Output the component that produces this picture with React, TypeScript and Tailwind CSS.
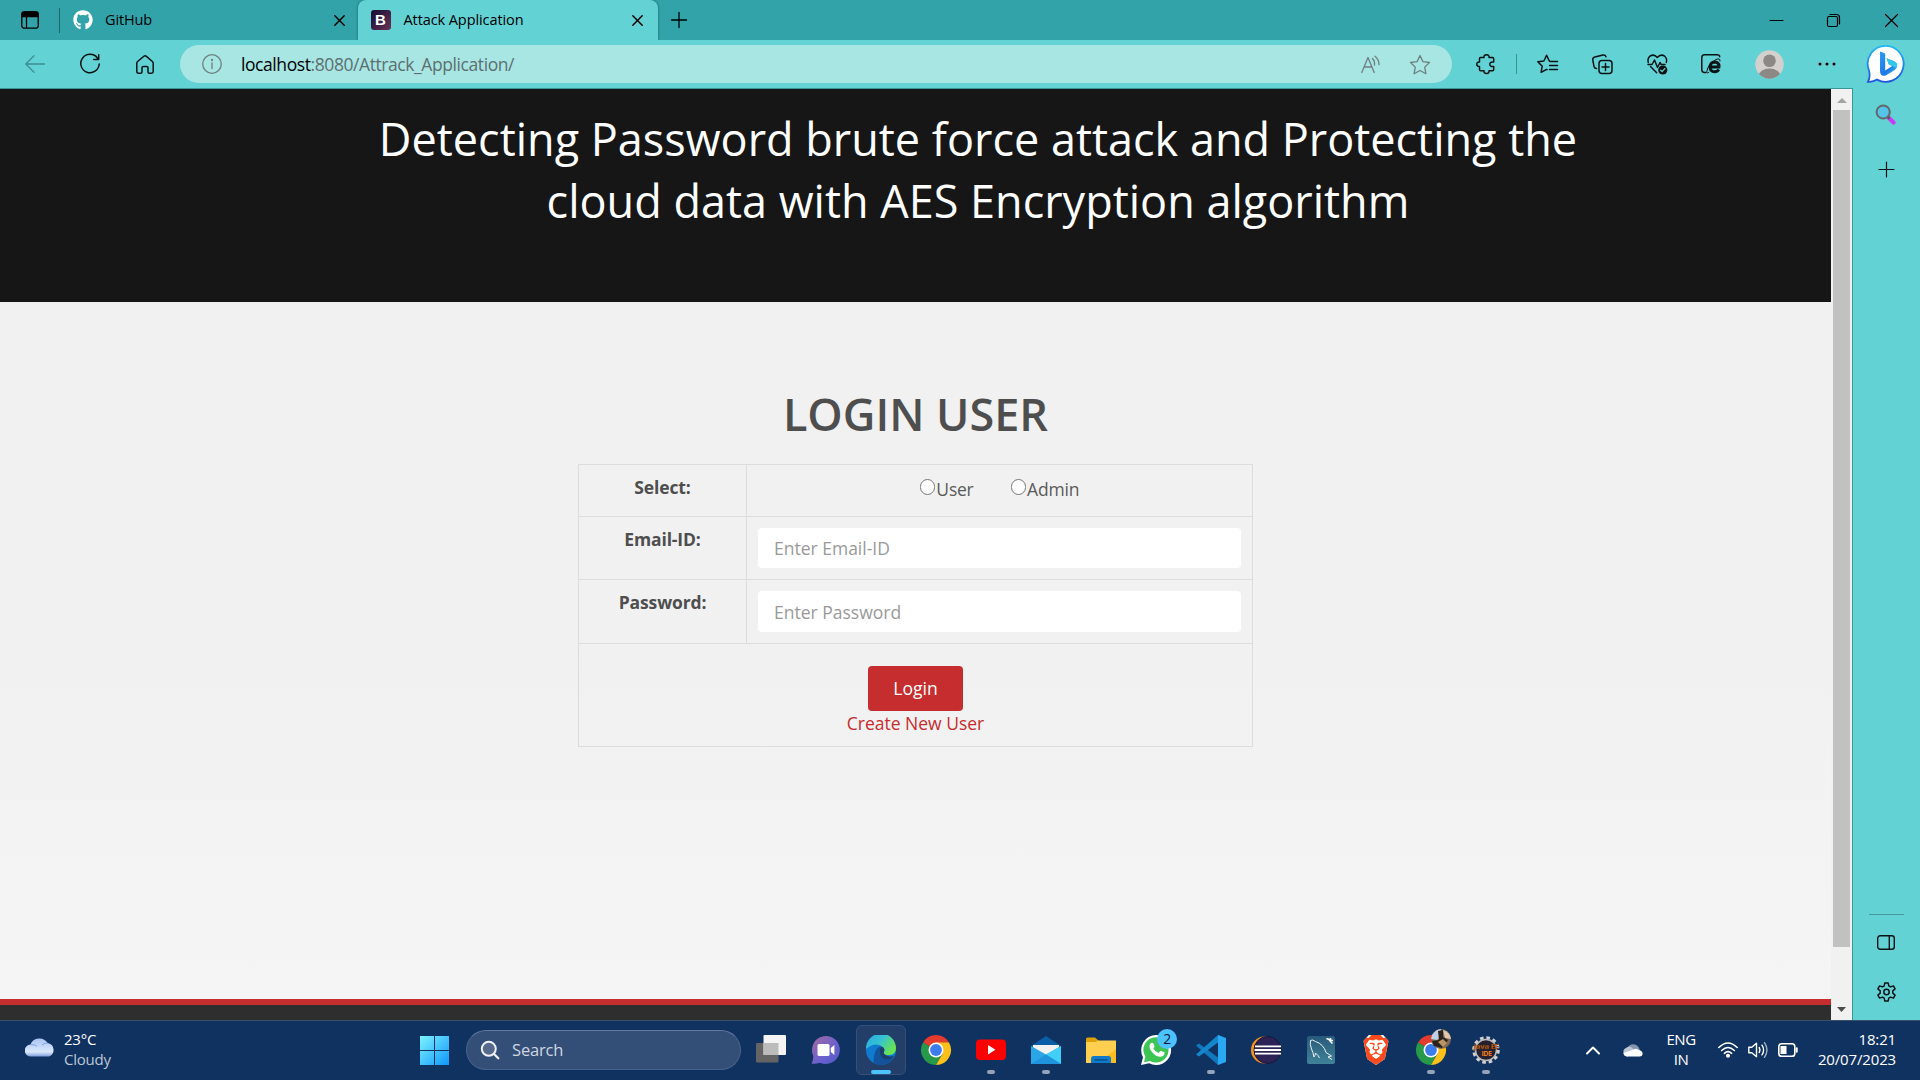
import React from "react";
import { FaGithub } from "react-icons/fa";
import { SiBrave } from "react-icons/si";

type BoxProps = {
  w: number;
  h: number;
  className?: string;
  children: React.ReactNode;
};

/** Stroked drawing on a one-to-one pixel grid. */
function Line({ w, h, className = "", children }: BoxProps) {
  return (
    <svg
      width={w}
      height={h}
      viewBox={`0 0 ${w} ${h}`}
      fill="none"
      stroke="currentColor"
      strokeWidth={1.3}
      strokeLinecap="round"
      strokeLinejoin="round"
      className={`shrink-0 overflow-visible ${className}`}
    >
      {children}
    </svg>
  );
}

function CloseX({ className = "" }: { className?: string }) {
  return (
    <Line w={11} h={11} className={className}>
      <path d="M.8 .8 10.2 10.2M10.2 .8 .8 10.2" strokeWidth={1.5} />
    </Line>
  );
}

function TabStrip() {
  return (
    <div className="flex h-10 items-center bg-[#32a4a9] text-black">
      <Line w={18} h={18} className="ml-[21px]">
        <rect x=".8" y=".8" width="16.4" height="16.4" rx="2.5" />
        <path d="M1 5.5V3q0-2 2-2h12q2 0 2 2v2.500z" fill="currentColor" />
        <path d="M5.500 5.500v11" />
      </Line>
      <div className="ml-5 h-[25px] w-px bg-[#1c6468]" />
      <FaGithub className="ml-[13px] size-5 shrink-0 text-white" />
      <span className="ml-[12px] w-[228.500px] text-[14.500px] leading-5 tracking-[-0.010em]">GitHub</span>
      <CloseX />
      <div className="ml-[13px] flex h-10 w-[300px] items-center rounded-t-lg bg-[#63d2d4] pl-[13px] shadow-[0_0_3px_rgba(0,60,60,0.6)] [clip-path:inset(0_-5px_0_-5px)]">
        <div className="flex size-5 items-center justify-center rounded-[3px] bg-linear-to-br from-[#140b33] to-[#6b3355] font-['Liberation_Sans'] text-[15px] font-bold text-white">
          B
        </div>
        <span className="ml-[13px] w-[228px] text-[14.500px] leading-5 tracking-[-0.006em]">Attack Application</span>
        <CloseX />
      </div>
      <Line w={16} h={16} className="ml-[13px]">
        <path d="M8 .5v15M.5 8h15" />
      </Line>
      <Line w={13} h={13} className="ml-auto">
        <path d="M0 6.500h13" strokeWidth={1} />
      </Line>
      <Line w={13} h={13} className="ml-[44px]">
        <rect x=".5" y="2.500" width="10" height="10" rx="1.500" strokeWidth={1.200} />
        <path d="M3 .5h6.500q3 0 3 3v6.500" strokeWidth={1.200} />
      </Line>
      <Line w={13} h={13} className="mr-[22px] ml-[45px]">
        <path d="M.5 .5l12 12M12.500 .5l-12 12" strokeWidth={1.200} />
      </Line>
    </div>
  );
}

function BingLogo() {
  return (
    <svg width="40" height="40" viewBox="0 0 40 40" className="shrink-0">
      <defs>
        <linearGradient id="ring" x1="0" y1="0" x2="0" y2="1">
          <stop offset="0" stopColor="#22b8f5" />
          <stop offset="1" stopColor="#1b55dd" />
        </linearGradient>
        <linearGradient id="bee" x1="0" y1="0" x2="1" y2="1">
          <stop offset="0" stopColor="#2c9bf2" />
          <stop offset=".6" stopColor="#2077e8" />
          <stop offset="1" stopColor="#2ec6ea" />
        </linearGradient>
      </defs>
      <path
        d="M20 1.800A18 18 0 1 1 11 35.600Q7 38.300 2 37.800 4.600 33 3 26.500A18 18 0 0 1 20 1.800Z"
        fill="#fff"
        stroke="url(#ring)"
        strokeWidth="1.800"
      />
      <path
        d="M14 7.500l5.200 2v17l7-4.500-3.400-1.800-2.300-6 7.500 3q3.600 1.600 3 5-.4 2.500-3 4.200l-8.300 5.100q-5.700 1.500-5.700-4.500Z"
        fill="url(#bee)"
      />
      <path d="M20.500 14.200l2.300 6 3.400 1.800 4.300 2q2-5.200-3-7Z" fill="#32c8ee" />
    </svg>
  );
}

function AddressBar() {
  return (
    <div className="flex h-12 items-center bg-[#63d2d4] text-[#0b1414]">
      <Line w={20} h={18} className="ml-[25px] text-[#3b8f91]">
        <path d="M9 .8.800 9 9 17.200M.8 9H19.500" />
      </Line>
      <Line w={20} h={20} className="ml-[35px]">
        <path d="M17.500 4.200A9.200 9.200 0 1 0 19.200 10M18.700 .8v4.700h-5" strokeWidth={1.500} />
      </Line>
      <Line w={18} h={19} className="ml-[36px]">
        <path
          d="M.8 8.200q0-1 .8-1.700l6.300-5.300q1.100-.9 2.200 0l6.300 5.300q.8.700.8 1.700v8.300q0 1.700-1.700 1.700h-2.200q-1.300 0-1.300-1.300v-4.200q0-1.300-1.300-1.300H7.300q-1.300 0-1.300 1.300v4.200q0 1.300-1.300 1.300H2.500Q.8 18.200.8 16.500z"
          strokeWidth={1.500}
        />
      </Line>
      <div className="ml-[26px] flex h-[38px] w-[1272px] items-center rounded-full bg-[#a8e6e4] text-[#6e7f80]">
        <Line w={20} h={20} className="ml-[22px]">
          <circle cx="10" cy="10" r="9.300" />
          <path d="M10 9v5.500" />
          <circle cx="10" cy="6" r=".5" fill="currentColor" />
        </Line>
        <span className="ml-[19px] text-[17.500px] leading-6 tracking-[-0.024em] text-[#5d6f70]">
          <span className="text-black">localhost</span>:8080/Attrack_Application/
        </span>
        <Line w={20} h={20} className="ml-auto">
          <path d="M.8 18.500 7 3.500l6.200 15M3 13h8M11.500 4.500q2.500 2.500 2 6.500M14 2.200q4.200 3.500 4 8.500" />
        </Line>
        <Line w={22} h={21} className="mr-[21px] ml-[28px]">
          <path d="M11 1.500l2.900 6.100 6.600.9-4.800 4.600 1.200 6.600L11 16.500l-5.900 3.200 1.200-6.600L1.500 8.500l6.600-.9z" />
        </Line>
      </div>
      <Line w={20} h={20} className="ml-[24px]">
        <path
          d="M3.500 4.500Q3.500 3.500 4.500 3.500H8Q7.500.8 10.500.8T13 3.500h3.500q1.200 0 1.200 1.200V8Q13.800 7.500 13.800 10.200T17.700 12.500V15.500q0 1.200-1.200 1.200H13Q13.500 19.500 10.500 19.500T8 16.700H4.700q-1.200 0-1.200-1.200V12.500Q.8 12.500.8 10.200T3.500 8z"
          strokeWidth={1.500}
        />
      </Line>
      <div className="ml-[20px] h-5 w-px bg-[#3b8f91]" />
      <Line w={21} h={20} className="ml-[20px]">
        <path
          d="M12.300 7 9.600 1.200 6.900 7 .8 7.800l4.400 4.300-1.100 6.200 5.500-2.900.5.300M13 7.500h7.500M12.500 11.500h8M12.500 15.500h8"
          strokeWidth={1.500}
        />
      </Line>
      <Line w={21} h={20} className="ml-[34px]">
        <rect x="7" y="6.500" width="13" height="13" rx="3" strokeWidth={1.500} />
        <path d="M13.500 9.500v7M10 13h7M4.500 14.500Q2.500 14.500 2 12.500L.8 6Q.5 3.500 2.800 3L11 1q2.300-.4 3 1.800" strokeWidth={1.500} />
      </Line>
      <Line w={21} h={21} className="ml-[34px]">
        <path
          d="M1.300 8.500Q.2 4.500 3 2.200 7-.5 10.300 3.500 13.700-.5 17.700 2.200 20.400 4.500 19.300 8.500M3.500 12.500l6.200 6.200M1 10.500h4L7.500 6l3 7.500 2.500-5 1.200 2H18"
          strokeWidth={1.500}
        />
        <circle cx="15.800" cy="16" r="4.600" fill="currentColor" stroke="none" />
        <path d="M13.700 16.200l1.400 1.400 2.700-3" stroke="#63d2d4" />
      </Line>
      <Line w={21} h={20} className="ml-[33px]">
        <path d="M5 18.500H3.500q-2.700 0-2.700-2.700V3.500Q.8.800 3.500.8H16q2.700 0 2.700 2" strokeWidth={1.500} />
        <path
          d="M8.300 13h11M17.800 15.500Q16.500 17.800 13.600 17.800 9.300 17.800 8.900 13 9.300 8.300 13.800 8q4.200.2 4.500 4.700"
          strokeWidth={2.900}
          strokeLinecap="butt"
        />
        <path d="M8 18.200Q6 20 5.800 17.500 7 10 15 5.500q4.500-1.800 4 1.500" strokeWidth={1} />
      </Line>
      <svg width="29" height="29" viewBox="0 0 29 29" className="ml-[33px] shrink-0">
        <clipPath id="face">
          <circle cx="14.500" cy="14.500" r="14.200" />
        </clipPath>
        <g clipPath="url(#face)">
          <path d="M0 0h29v29H0z" fill="#d3d0cd" />
          <circle cx="14.500" cy="10.800" r="6.300" fill="#8b8886" />
          <ellipse cx="14.500" cy="26" rx="11" ry="7.500" fill="#8b8886" />
        </g>
      </svg>
      <svg width="18" height="4" viewBox="0 0 18 4" className="ml-[34px] shrink-0">
        <circle cx="2" cy="2" r="1.500" />
        <circle cx="9" cy="2" r="1.500" />
        <circle cx="16" cy="2" r="1.500" />
      </svg>
      <div className="ml-[30px]">
        <BingLogo />
      </div>
    </div>
  );
}

function FieldRow({ label, className, children }: { label: string; className: string; children: React.ReactNode }) {
  return (
    <div className={`flex border-b border-[#dddddd] ${className}`}>
      <div className="w-[168px] border-r border-[#dddddd] pt-[10px] text-center font-bold tracking-[-0.008em]">
        {label}
      </div>
      <div className="flex-1 px-[11px] pt-[11px]">{children}</div>
    </div>
  );
}

function Radio({ label }: { label: string }) {
  return (
    <label className="flex">
      <span className="mt-[2px] mr-[1px] size-[15.500px] rounded-full border border-[#767676] bg-white" />
      {label}
    </label>
  );
}

function WebPage() {
  return (
    <div className="flex w-[1831px] flex-col">
      <header className="h-[213px] bg-[#161616] pt-[19px] pl-[328px]">
        <h1 className="w-[1300px] text-center text-[45px] leading-[62px] text-white">
          Detecting Password brute force attack and Protecting the
          <br />
          cloud data with AES Encryption algorithm
        </h1>
      </header>
      <main className="flex h-[697px] flex-col items-center bg-linear-to-b from-[#f1f1f1] from-50% to-[#f5f5f5] pt-[81px] text-[#4e4e4e]">
        <h2 className="text-[45px] leading-[62px] font-semibold">LOGIN USER</h2>
        <form className="mt-[19px] w-[675px] border border-b-0 border-[#dddddd] text-[17.500px] leading-[25px]">
          <FieldRow label="Select:" className="h-[52px]">
            <div className="mt-[1px] flex justify-center gap-[37px] leading-[24px] tracking-[-0.012em] text-[#5a5a5a]">
              <Radio label="User" />
              <Radio label="Admin" />
            </div>
          </FieldRow>
          <FieldRow label="Email-ID:" className="h-[63px]">
            <input
              placeholder="Enter Email-ID"
              className="block h-[40px] w-full rounded bg-white px-4 placeholder:text-[#999999]"
            />
          </FieldRow>
          <FieldRow label="Password:" className="h-[64px]">
            <input
              placeholder="Enter Password"
              className="block h-[41px] w-full rounded bg-white px-4 placeholder:text-[#999999]"
            />
          </FieldRow>
          <div className="flex h-[103px] flex-col items-center border-b border-[#dddddd] pt-[22px]">
            <button type="button" className="h-[45px] w-[95px] rounded bg-[#c52d2f] font-medium text-white">
              Login
            </button>
            <a className="text-[#c52d2f]">Create New User</a>
          </div>
        </form>
      </main>
      <footer className="h-[21px] border-t-[6px] border-[#c52d2f] bg-[#2e2e2e]" />
    </div>
  );
}

function Scrollbar() {
  return (
    <div className="flex w-[21px] flex-col items-center bg-[#f1f1f1]">
      <svg width="10" height="5" viewBox="0 0 10 5" className="mt-[9px] shrink-0">
        <path d="M0 5 5 0l5 5z" fill="#a3a3a3" />
      </svg>
      <div className="mt-[7px] h-[837px] w-[17px] bg-[#c1c1c1]" />
      <svg width="9" height="5" viewBox="0 0 9 5" className="mt-[60px] shrink-0">
        <path d="M0 0h9L4.500 5z" fill="#4c4c4c" />
      </svg>
    </div>
  );
}

function SideRail() {
  return (
    <aside className="flex flex-1 flex-col items-center border-l border-[#3a9799] bg-[#63d2d4] pt-[16px] pr-px text-[#0b1414]">
      <svg width="21" height="21" viewBox="0 0 21 21" className="mr-px">
        <path d="M14 14l4.500 4.500" stroke="#c63cf5" strokeWidth="4.200" strokeLinecap="round" />
        <path d="M12 12l2.500 2.500" stroke="#555" strokeWidth="2.500" />
        <circle cx="8.200" cy="8" r="6.600" fill="#56c3e8" stroke="#62696c" strokeWidth="2" />
      </svg>
      <Line w={15} h={15} className="mt-[37px]">
        <path d="M7.500 0v15M0 7.500h15" strokeWidth={1.200} />
      </Line>
      <div className="mt-[737px] h-px w-[35px] bg-[#45999b]" />
      <Line w={18} h={15} className="mt-[20px]">
        <rect x=".7" y=".7" width="16.600" height="13.600" rx="2.500" strokeWidth={1.400} />
        <path d="M12.300 1v13" strokeWidth={1.400} />
      </Line>
      <Line w={21} h={21} className="mt-[32px]">
        <path
          d="M8.800 1h3.400l.6 2.900 1.700 1 2.900-1 1.700 3-2.300 1.900v2.400l2.300 1.900-1.700 3-2.900-1-1.700 1-.6 2.900H8.800l-.6-2.900-1.700-1-2.900 1-1.700-3 2.300-1.900V8.800L1.900 6.900l1.700-3 2.900 1 1.700-1z"
          strokeWidth={1.500}
        />
        <circle cx="10.500" cy="10" r="2.700" strokeWidth={1.500} />
      </Line>
    </aside>
  );
}

function TaskIcon({ children, dot = false }: { children: React.ReactNode; dot?: boolean }) {
  return (
    <div className="relative flex h-[59px] w-[55px] items-center justify-center">
      <svg width="30" height="30" viewBox="0 0 30 30" className="overflow-visible">
        {children}
      </svg>
      {dot && <span className="absolute bottom-[6px] left-[23px] h-1 w-2 rounded-full bg-[#94a3bb]" />}
    </div>
  );
}

function ChromeArt() {
  return (
    <>
      <path d="M15 15 2 7.500A15 15 0 0 1 28 7.500z" fill="#e33b2e" />
      <path d="M15 15 2 7.500A15 15 0 0 0 15 30l6.500-11.500z" fill="#26994a" />
      <path d="M15 7.500H28A15 15 0 0 1 15 30l6.500-11.300z" fill="#fcc01a" />
      <circle cx="15" cy="15" r="7.500" fill="#fff" />
      <circle cx="15" cy="15" r="5.900" fill="#3b7ded" />
    </>
  );
}

function PinnedApps() {
  return (
    <div className="flex">
      <TaskIcon>
        <rect x="0" y="8" width="22.500" height="19.500" rx="1" fill="#646464" />
        <rect x="7.500" y="0" width="22.500" height="20" rx="1" fill="#f4f4f4" />
        <rect x="7.500" y="8" width="15" height="12" fill="#bcbcbc" />
      </TaskIcon>
      <TaskIcon>
        <defs>
          <linearGradient id="chat" x1="0" y1="0" x2="1" y2="1">
            <stop offset="0" stopColor="#a56a9e" />
            <stop offset=".6" stopColor="#6a60cf" />
            <stop offset="1" stopColor="#4f57c4" />
          </linearGradient>
        </defs>
        <path d="M15.500 1A14 14 0 1 1 9 27.700Q5 29.500.5 28.500 2.500 25.500 2.300 21A14 14 0 0 1 15.500 1Z" fill="url(#chat)" />
        <rect x="6.500" y="9" width="12" height="12" rx="1.500" fill="#fff" />
        <path d="M19.800 13l3.600-3v10l-3.600-3z" fill="#fff" />
      </TaskIcon>
      <div className="relative flex h-[59px] w-[55px] items-center justify-center">
        <div className="flex size-[50px] items-center justify-center rounded-md border border-[#33517a] bg-[#233f69]">
          <svg width="30" height="30" viewBox="0 0 30 30">
            <defs>
              <linearGradient id="edgeTop" x1="0" y1="0" x2="1" y2=".6">
                <stop offset="0" stopColor="#28a8e8" />
                <stop offset=".5" stopColor="#35c1d2" />
                <stop offset="1" stopColor="#6ce34b" />
              </linearGradient>
            </defs>
            <circle cx="15" cy="15" r="15" fill="#0f7bd0" />
            <path d="M0 14A15 15 0 0 1 30 13Q30 20 23 20 17 20 17.500 17 19 15 17.500 12.500 10 6 0 14Z" fill="url(#edgeTop)" />
            <path d="M7.500 27.500Q8 12 15 11.500 10.500 22 20 24q4.500.5 8-2Q24 30 15 30 10.500 30 7.500 27.500Z" fill="#12539c" />
            <path d="M15 11.500q3.500 1 3.500 4-2 2.500 1 4.500 4 2.500 9 .5-5 6.500-12 2.500-5-4-1.500-11.500Z" fill="#1b3e6c" />
          </svg>
        </div>
        <span className="absolute bottom-[6px] left-[17px] h-1 w-5 rounded-full bg-[#4cc2ff]" />
      </div>
      <TaskIcon>
        <ChromeArt />
      </TaskIcon>
      <TaskIcon dot>
        <rect x="0" y="4.500" width="30" height="20.500" rx="4" fill="#fe0000" />
        <path d="M12 10l7.500 4.700L12 19.500z" fill="#fff" />
      </TaskIcon>
      <TaskIcon dot>
        <path d="M0 11 15 1l15 10v6H0z" fill="#0a5ea8" />
        <path d="M2 10h26v8L15 23 2 18z" fill="#f2f2f2" />
        <path d="M0 11l15 8.500L30 11v18H0z" fill="#2aa6e6" />
        <path d="M15 19.500 30 11v18z" fill="#40cff7" />
        <path d="M0 29 15 19.500 30 29z" fill="#1f93dd" />
      </TaskIcon>
      <TaskIcon>
        <path d="M0 4q0-1.500 1.500-1.500H9L13 6v6H0z" fill="#e0a008" />
        <path d="M0 7h9.500l2.500-1.500h18V28H0z" fill="#ffd04f" />
        <path d="M30 14v14H12z" fill="#f9bd22" />
        <path d="M5 28v-4.500q0-2.500 2.500-2.500h15q2.500 0 2.500 2.500V28z" fill="#117ac9" />
        <path d="M8.500 25h13" stroke="#07508c" strokeWidth="1.500" />
      </TaskIcon>
      <TaskIcon>
        <path d="M15 0a15 15 0 1 1-6.800 28.300L0 30l2-7.800A15 15 0 0 1 15 0Z" fill="#fff" />
        <path d="M15 2.200A12.700 12.700 0 1 1 8.700 26L3 27.200l1.400-5.500A12.700 12.700 0 0 1 15 2.200Z" fill="#3dc453" />
        <path
          d="M10 8q1.700-1 2.500.7l1 2.500q.2.900-1.200 2.300 1.800 3.200 5.300 4.600l1.600-2q.5-.5 1.200-.2l2.800 1.400q.6.400.3 1.600-.8 2.700-3.800 2.800-5 .1-9.300-5.500Q6.700 11.500 10 8Z"
          fill="#fff"
        />
        <circle cx="26" cy="4" r="10" fill="#4cc2ff" />
        <text x="26" y="9" textAnchor="middle" fontSize="14" fill="#0d1c2e">
          2
        </text>
      </TaskIcon>
      <TaskIcon dot>
        <path d="M0 10.500 3 8.500 24 24v5L22 30z" fill="#1178be" />
        <path d="M0 19.500 3 21.500 24 6V1L22 0z" fill="#1486cc" />
        <path d="M22 0l8 3v24l-8 3z" fill="#2aa8f2" />
      </TaskIcon>
      <TaskIcon>
        <circle cx="13.500" cy="15" r="13.500" fill="#f7941e" />
        <circle cx="16.500" cy="15" r="13.500" fill="#2c2255" stroke="#17173a" />
        <path d="M4 11.300h26M3.500 15h26.500M4 18.700h26" stroke="#fff" strokeWidth="1.800" />
      </TaskIcon>
      <TaskIcon>
        <defs>
          <linearGradient id="sea" x1="0" y1="0" x2="0" y2="1">
            <stop offset="0" stopColor="#285979" />
            <stop offset="1" stopColor="#418398" />
          </linearGradient>
        </defs>
        <rect x="1" y="1" width="28" height="28" rx="2" fill="url(#sea)" />
        <path
          d="M8 22Q7 17 5.500 14 3.500 9 4.500 5.500 6 4 9.500 6.500q8 2.500 10.500 11l5.500 3.500-3.500 1 4 2.500M8 22q1-1 1.500-4 3 2.500 4 5"
          stroke="#e9f1f5"
          strokeWidth="1"
          fill="none"
        />
        <path d="M20.500 3.500l2.500 1 1.500 2 2 2M24.500 3v2.500h2.500" stroke="#fff" strokeWidth="1.600" fill="none" />
      </TaskIcon>
      <div className="flex h-[59px] w-[55px] items-center justify-center">
        <div className="flex h-[30px] w-[26px] items-center justify-center bg-white [clip-path:polygon(22%_0,78%_0,98%_20%,84%_80%,50%_100%,16%_80%,2%_20%)]">
          <SiBrave className="size-[30px] shrink-0 text-[#fb4a1c]" />
        </div>
      </div>
      <TaskIcon dot>
        <ChromeArt />
        <circle cx="25" cy="4" r="10" fill="#806a55" />
        <path d="M16 0Q20-6 25-6l-1 8-3 3-6-1z" fill="#bfd0e4" />
        <path d="M27-5q7 2 8 9l-6-1z" fill="#e2c7ae" />
        <path d="M22-4l5-1v7l5 3-6 8-8-2-2-5 7-1z" fill="#29221f" />
        <path d="M22 7l5-3 4 4-4 4z" fill="#bb9465" />
      </TaskIcon>
      <TaskIcon dot>
        <circle cx="15" cy="15" r="12.300" fill="none" stroke="#d0d0d0" strokeWidth="3" strokeDasharray="3.600 2.840" />
        <circle cx="15" cy="15" r="10.500" fill="#26202f" stroke="#bdbdbd" strokeWidth="1.500" />
        <text
          x="15"
          y="14"
          textAnchor="middle"
          fontSize="7.500"
          fontWeight="bold"
          fill="#ee7c1e"
          stroke="#35160a"
          strokeWidth=".3"
          textLength="25"
        >
          Java EE
        </text>
        <text x="15.500" y="20.500" textAnchor="middle" fontSize="7" fontWeight="bold" fill="#ee7c1e">
          IDE
        </text>
      </TaskIcon>
    </div>
  );
}

function Taskbar() {
  return (
    <div className="flex h-[60px] items-center border-t border-[#3a4f68] bg-[#103260] text-[15px] leading-5 tracking-[-0.030em] text-white">
      <svg width="30" height="20" viewBox="0 0 30 20" className="mb-[7px] ml-[25px] shrink-0">
        <defs>
          <linearGradient id="puff" x1="0" y1="0" x2="0" y2="1">
            <stop offset="0" stopColor="#a9c3f2" />
            <stop offset=".75" stopColor="#dbe8fc" />
            <stop offset="1" stopColor="#7d9ddb" />
          </linearGradient>
        </defs>
        <path d="M6 19.500A6 6 0 0 1 5.500 7.500 9.500 9.500 0 0 1 22.500 6 7 7 0 0 1 24 19.500z" fill="url(#puff)" />
        <path d="M5.500 7.700q4-.7 6.500 1.600M17 8q3-2.500 6-2" stroke="#7fa1e4" strokeWidth="1" fill="none" />
      </svg>
      <div className="mb-1 ml-[9px] w-[356px] tracking-[-0.015em]">
        <div>23°C</div>
        <div className="text-[#bcc7d6]">Cloudy</div>
      </div>
      <svg width="29" height="29" viewBox="0 0 29 29" className="shrink-0">
        <defs>
          <linearGradient id="win" x1="0" y1="0" x2="1" y2="1">
            <stop offset="0" stopColor="#7df3fd" />
            <stop offset="1" stopColor="#0f96fb" />
          </linearGradient>
        </defs>
        <path d="M0 0h14v14H0zM15 0h14v14H15zM0 15h14v14H0zM15 15h14v14H15z" fill="url(#win)" />
      </svg>
      <div className="mb-px ml-[17px] flex h-10 w-[275px] items-center rounded-full border border-[#48618a] border-t-[#6277a0] bg-[#334f78]">
        <Line w={18} h={18} className="ml-[14px] text-[#f0f2f5]">
          <circle cx="7.800" cy="7.800" r="7" fill="#566b8c" strokeWidth={2} />
          <path d="M13 13l4.300 4.300" strokeWidth={2.200} />
        </Line>
        <span className="ml-[13px] text-[16.500px] tracking-[-0.010em] text-[#cfd6e0]">Search</span>
      </div>
      <div className="mb-px ml-[2.500px]">
        <PinnedApps />
      </div>
      <div className="mb-1 ml-auto flex items-center">
        <Line w={14} h={8} className="mt-[3px]">
          <path d="M1 7.500l6-6 6 6" strokeWidth={2} />
        </Line>
        <svg width="20" height="14" viewBox="0 0 20 14" className="mt-[3px] ml-[23px] shrink-0">
          <path d="M4 8A6.300 6.300 0 0 1 15.500 4L18 9H3z" fill="#8594ae" />
          <path d="M4 13.500A4.500 4.500 0 0 1 3 5q4-3 7.500 1l4 5z" fill="#bcc5d4" />
          <path d="M4 13.500Q.5 13 .5 10L10 6.800Q13 4.500 15.500 7 19.500 7.500 19.700 11q-.5 2.500-3 2.500z" fill="#fff" />
        </svg>
        <div className="ml-[23px] w-[30px] text-center">
          <div>ENG</div>
          <div>IN</div>
        </div>
        <Line w={20} h={16} className="mt-[3px] ml-[22px]">
          <path d="M.8 5.500q9.200-9 18.400 0M3.600 8.500q6.400-6 12.800 0M6.400 11.300q3.600-3.300 7.200 0" strokeWidth={1.600} />
          <circle cx="10" cy="13.700" r="1.400" fill="currentColor" />
        </Line>
        <Line w={20} h={16} className="mt-[3px] ml-[10px]">
          <path d="M.8 5.300h3L8.500 1.200v13.600l-4.700-4.100h-3z" strokeWidth={1.400} />
          <path d="M11.200 5.500q1.600 2.500 0 5M14 3.200q3.200 4.800 0 9.600" strokeWidth={1.400} />
          <path d="M16.500 .7q5 7.300 0 14.600" strokeWidth={1.400} stroke="#9fb0c9" />
        </Line>
        <Line w={20} h={14} className="mt-[3px] ml-[10px]">
          <rect x=".8" y=".8" width="16" height="12.400" rx="2.800" strokeWidth={1.600} />
          <rect x="2.500" y="3" width="6" height="8" fill="currentColor" stroke="none" />
          <path d="M18.700 5.300v3.400" strokeWidth={2} />
        </Line>
        <div className="mr-6 ml-[10px] w-[88px] text-right tracking-[-0.010em]">
          <div>18:21</div>
          <div>20/07/2023</div>
        </div>
      </div>
    </div>
  );
}

export default function App() {
  return (
    <div className="flex h-[1080px] w-[1920px] flex-col overflow-hidden font-['Open_Sans',sans-serif]">
      <TabStrip />
      <AddressBar />
      <div className="flex h-[932px]">
        <div className="flex w-[1852px] border-t border-[#3a9799]">
          <WebPage />
          <Scrollbar />
        </div>
        <SideRail />
      </div>
      <Taskbar />
    </div>
  );
}
